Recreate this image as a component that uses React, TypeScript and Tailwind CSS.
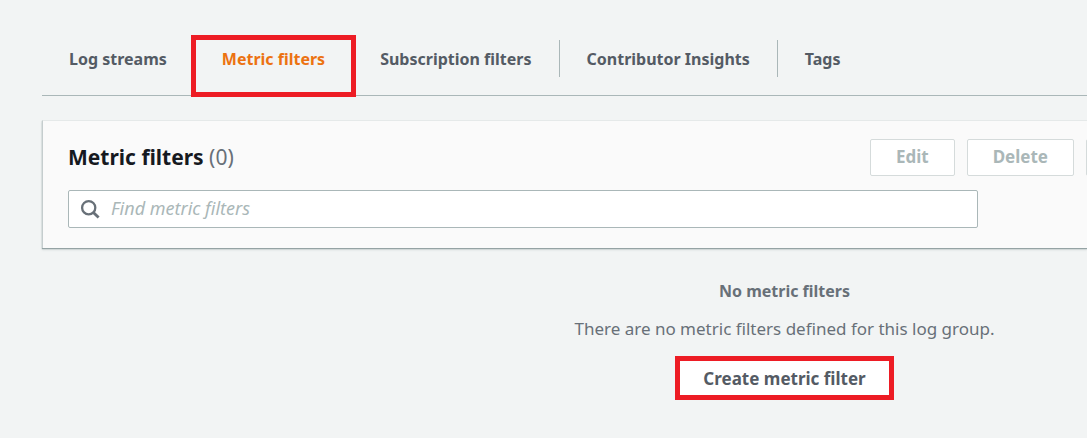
const tabs = ['Log streams', 'Metric filters', 'Subscription filters', 'Contributor Insights', 'Tags'];
const activeTab = 'Metric filters';

function SearchIcon() {
  return (
    <svg viewBox="0 0 20 20" className="pointer-events-none col-start-1 row-start-1 ml-3 size-5 self-center" fill="none" stroke="#687078" strokeWidth="2.3" aria-hidden="true">
      <circle cx="8.7" cy="8.7" r="6.6" />
      <path d="M13.4 13.4 18.6 18.6" strokeWidth="2.8" />
    </svg>
  );
}

function Tabs() {
  return (
    <nav aria-label="Log group details" className="flex border-b border-[#aab7b8] pb-[18px]">
      {tabs.map((tab, index) => (
        <a
          key={tab}
          href="#"
          aria-current={tab === activeTab ? 'page' : undefined}
          className={`relative flex h-[37px] items-center px-[27px] text-[16px] font-bold whitespace-nowrap ${
            tab === activeTab ? 'text-[#ec7211]' : 'text-[#545b64]'
          } ${index < tabs.length - 1 ? 'border-r border-[#aab7b8]' : ''}`}
        >
          {tab}
          {tab === activeTab && <span className="absolute -inset-x-1 -top-[5px] -bottom-5 border-5 border-[#ed1c24]" />}
        </a>
      ))}
    </nav>
  );
}

function FilterPanel() {
  return (
    <section className="border-t border-l border-t-[#e5e9e9] border-l-[#c5cdce] bg-[#fafafa] pt-[18px] pb-5 pl-[25px] shadow-[0_1px_1px_#95a3a4,0_2px_2px_#d5dbdb]">
      <header className="flex items-start justify-between">
        <h2 className="text-[21px] leading-9 font-bold text-[#16191f]">
          Metric filters <span className="font-normal text-[#687078]">(0)</span>
        </h2>
        <div className="flex gap-3">
          <button disabled className="h-[37px] rounded-xs border border-[#d5dbdb] bg-white px-[25px] pb-0.5 text-[17px] font-bold text-[#aab7b8]">
            Edit
          </button>
          <button disabled className="h-[37px] rounded-xs border border-[#d5dbdb] bg-white px-[25px] pb-0.5 text-[17px] font-bold text-[#aab7b8]">
            Delete
          </button>
          <button disabled aria-label="Create alarm" className="-mr-[95px] h-[37px] w-24 rounded-xs border border-[#d5dbdb] bg-white" />
        </div>
      </header>
      <div className="mt-[14px] mr-[109px] grid">
        <input
          type="search"
          aria-label="Find metric filters"
          placeholder="Find metric filters"
          className="col-start-1 row-start-1 h-[38px] min-w-0 rounded-xs border border-[#aab7b8] bg-white pr-3 pb-0.5 pl-[42px] text-[18px] text-[#16191f] placeholder:text-[#aab7b8] placeholder:italic"
        />
        <SearchIcon />
      </div>
    </section>
  );
}

function EmptyState() {
  return (
    <section className="-mr-[440px] flex flex-col items-center pt-[31px] text-[17px] leading-6 text-[#687078]">
      <h3 className="text-[16px] font-bold">No metric filters</h3>
      <p className="mt-[14px]">There are no metric filters defined for this log group.</p>
      <button className="mt-[15px] h-11 border-5 border-[#ed1c24] bg-white px-[23px] pt-0.5 font-bold text-[#545b64]">Create metric filter</button>
    </section>
  );
}

export default function App() {
  return (
    <main className="min-h-screen overflow-hidden bg-[#f2f4f4] pt-10 pb-8 pl-[42px] font-['Noto_Sans',sans-serif]">
      <Tabs />
      <div className="mt-6">
        <FilterPanel />
        <EmptyState />
      </div>
    </main>
  );
}
